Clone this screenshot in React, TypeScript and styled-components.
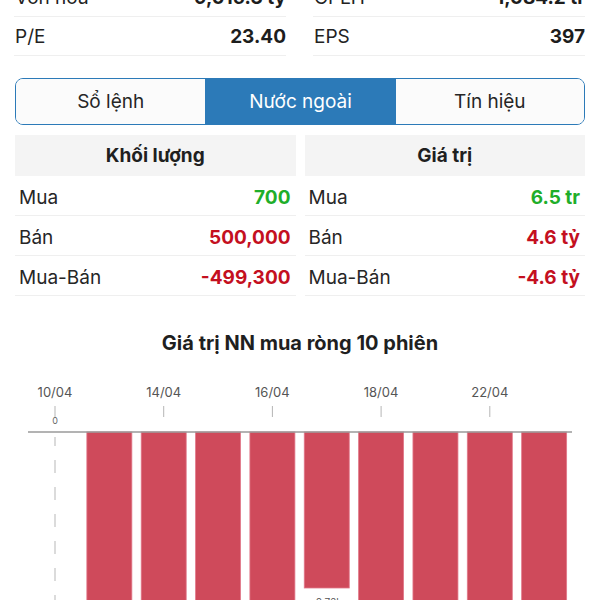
import React from "react";
import styled, { createGlobalStyle } from "styled-components";

const GlobalStyle = createGlobalStyle`
  html, body {
    margin: 0;
    padding: 0;
    background: #ffffff;
    overflow: hidden;
  }
  body {
    font-family: Inter, "Liberation Sans", Arial, sans-serif;
    color: #222222;
  }
`;

const Page = styled.div`
  width: 600px;
  height: 600px;
  overflow: hidden;
  display: block;
`;

const StatsGrid = styled.div`
  display: grid;
  grid-template-columns: 1fr 1fr;
  column-gap: 27px;
  padding: 0 15px 0 14px;
  margin-top: -22px;
`;

const StatRow = styled.div`
  height: 38px;
  display: flex;
  align-items: center;
  justify-content: space-between;
  border-bottom: 1px solid #efefef;
  font-size: 19px;
`;

const StatLabel = styled.span`
  color: #222;
  padding-left: 1px;
`;

const StatValue = styled.span`
  font-weight: 700;
  color: #1d1d1d;
`;

const Tabs = styled.div`
  margin: 22px 15px 0;
  height: 45px;
  display: grid;
  grid-template-columns: repeat(3, 1fr);
  border: 1.5px solid #2c7ab8;
  border-radius: 8px;
  overflow: hidden;
`;

const Tab = styled.div<{ $active?: boolean }>`
  display: flex;
  align-items: center;
  justify-content: center;
  font-size: 19px;
  background: ${(p) => (p.$active ? "#2c7ab8" : "#fbfbfb")};
  color: ${(p) => (p.$active ? "#ffffff" : "#262626")};
  & + & {
    border-left: 1.5px solid #2c7ab8;
  }
`;

const Tables = styled.div`
  display: grid;
  grid-template-columns: 1fr 1fr;
  column-gap: 9px;
  padding: 0 15px;
  margin-top: 10px;
`;

const Table = styled.div`
  display: flex;
  flex-direction: column;
`;

const TableHeader = styled.div`
  height: 41px;
  flex: none;
  background: #f4f4f4;
  display: flex;
  align-items: center;
  justify-content: center;
  font-size: 19px;
  font-weight: 700;
  color: #1f1f1f;
`;

const TableRow = styled.div`
  box-sizing: border-box;
  height: 40px;
  flex: none;
  display: flex;
  align-items: center;
  justify-content: space-between;
  padding: 4px 5px 0 4px;
  border-bottom: 1px solid #efefef;
  font-size: 19px;
`;

const RowLabel = styled.span`
  color: #262626;
`;

const RowValue = styled.span<{ $tone: "up" | "down" }>`
  font-weight: 700;
  color: ${(p) => (p.$tone === "up" ? "#1fae2a" : "#c4101f")};
`;

const ChartTitle = styled.div`
  margin-top: 35px;
  height: 24px;
  line-height: 24px;
  text-align: center;
  font-size: 20px;
  font-weight: 700;
  color: #1f1f1f;
`;

const ChartSvg = styled.svg`
  display: block;
  margin-top: 15px;
  font-family: Inter, "Liberation Sans", Arial, sans-serif;
`;

const stats = [
  [
    { label: "Vốn hoá", value: "9,015.3 tỷ" },
    { label: "CPLH", value: "1,084.2 tr" },
  ],
  [
    { label: "P/E", value: "23.40" },
    { label: "EPS", value: "397" },
  ],
];

type Row = { label: string; value: string; tone: "up" | "down" };

const volumeRows: Row[] = [
  { label: "Mua", value: "700", tone: "up" },
  { label: "Bán", value: "500,000", tone: "down" },
  { label: "Mua-Bán", value: "-499,300", tone: "down" },
];

const valueRows: Row[] = [
  { label: "Mua", value: "6.5 tr", tone: "up" },
  { label: "Bán", value: "4.6 tỷ", tone: "down" },
  { label: "Mua-Bán", value: "-4.6 tỷ", tone: "down" },
];

const sessions = [
  { date: "10/04", h: 0 },
  { date: "11/04", h: 240 },
  { date: "14/04", h: 240 },
  { date: "15/04", h: 240 },
  { date: "16/04", h: 240 },
  { date: "17/04", h: 156, label: "-0.76b" },
  { date: "18/04", h: 240 },
  { date: "19/04", h: 240 },
  { date: "22/04", h: 240 },
  { date: "23/04", h: 240 },
];

const X0 = 55;
const STEP = 54.35;
const ZERO = 62;
const BAR_W = 45;

function Chart() {
  return (
    <ChartSvg width={600} height={240} viewBox="0 0 600 240">
      {sessions.map((s, i) => {
        const cx = X0 + i * STEP;
        return (
          <g key={s.date}>
            {i % 2 === 0 && (
              <>
                <text x={cx} y={27} textAnchor="middle" fontSize={13} fill="#555">
                  {s.date}
                </text>
                <line x1={cx} x2={cx} y1={36} y2={47} stroke="#b5b5b5" strokeWidth={1} />
              </>
            )}
            {s.h > 0 && (
              <rect
                x={cx - BAR_W / 2}
                y={ZERO}
                width={BAR_W}
                height={s.h}
                fill="#cf4a5b"
                stroke="#e2798a"
                strokeWidth={0.8}
              />
            )}
            {s.label && (
              <text x={cx} y={ZERO + s.h + 18} textAnchor="middle" fontSize={10} fill="#555">
                {s.label}
              </text>
            )}
          </g>
        );
      })}
      <text x={X0} y={54} textAnchor="middle" fontSize={9} fill="#666">
        0
      </text>
      <line x1={28} x2={572} y1={ZERO} y2={ZERO} stroke="#9a9a9a" strokeWidth={1.5} />
      <line x1={X0} x2={X0} y1={67} y2={76} stroke="#b5b5b5" strokeWidth={1} />
      <line
        x1={X0}
        x2={X0}
        y1={90}
        y2={240}
        stroke="#c4c4c4"
        strokeWidth={1.2}
        strokeDasharray="13 14"
      />
    </ChartSvg>
  );
}

export default function App() {
  return (
    <Page>
      <GlobalStyle />
      <StatsGrid>
        {stats.map((pair) =>
          pair.map((s) => (
            <StatRow key={s.label}>
              <StatLabel>{s.label}</StatLabel>
              <StatValue>{s.value}</StatValue>
            </StatRow>
          ))
        )}
      </StatsGrid>
      <Tabs>
        <Tab>Sổ lệnh</Tab>
        <Tab $active>Nước ngoài</Tab>
        <Tab>Tín hiệu</Tab>
      </Tabs>
      <Tables>
        <Table>
          <TableHeader>Khối lượng</TableHeader>
          {volumeRows.map((r) => (
            <TableRow key={r.label}>
              <RowLabel>{r.label}</RowLabel>
              <RowValue $tone={r.tone}>{r.value}</RowValue>
            </TableRow>
          ))}
        </Table>
        <Table>
          <TableHeader>Giá trị</TableHeader>
          {valueRows.map((r) => (
            <TableRow key={r.label}>
              <RowLabel>{r.label}</RowLabel>
              <RowValue $tone={r.tone}>{r.value}</RowValue>
            </TableRow>
          ))}
        </Table>
      </Tables>
      <ChartTitle>Giá trị NN mua ròng 10 phiên</ChartTitle>
      <Chart />
    </Page>
  );
}
